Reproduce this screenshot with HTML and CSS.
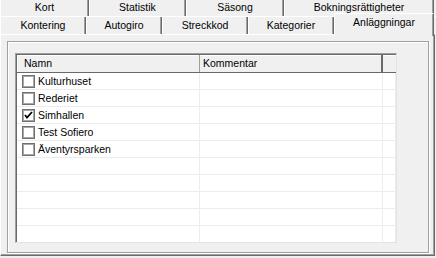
FILE: index.html
```html
<!DOCTYPE html>
<html lang="sv">
<head>
    <meta charset="UTF-8" />
    <title>Anläggningar</title>
    <link rel="stylesheet" href="styles.css">
</head>
<body>
<div class="window">
    <div class="tabrow top">
        <div class="tab" style="width: 89px">Kort</div>
        <div class="tab" style="width: 97px">Statistik</div>
        <div class="tab" style="width: 98px">Säsong</div>
        <div class="tab" style="width: 150px">Bokningsrättigheter</div>
    </div>
    <div class="tabrow bottom">
        <div class="tab" style="width: 86px">Kontering</div>
        <div class="tab" style="width: 76px">Autogiro</div>
        <div class="tab" style="width: 86px">Streckkod</div>
        <div class="tab" style="width: 86px">Kategorier</div>
        <div class="tab active" style="width: 100px">Anläggningar</div>
    </div>

    <div class="page">
        <div class="group">
            <div class="list">
                <div class="head">
                    <div class="col c1">Namn</div>
                    <div class="col c2">Kommentar</div>
                    <div class="col c3"></div>
                </div>
                <div class="rows" id="rows"></div>
            </div>
        </div>
    </div>
</div>

<script>
    const items = [
        { name: 'Kulturhuset', checked: false },
        { name: 'Rederiet', checked: false },
        { name: 'Simhallen', checked: true },
        { name: 'Test Sofiero', checked: false },
        { name: 'Äventyrsparken', checked: false }
    ];
    const check = '<svg width="9" height="9" viewBox="0 0 9 9"><path d="M1 4 L3 6.5 L8 1" fill="none" stroke="#000" stroke-width="1.8"/></svg>';

    const rows = document.getElementById('rows');
    for (let i = 0; i < 10; i++) {
        const item = items[i];
        const row = document.createElement('div');
        row.className = 'row';
        if (item) {
            row.innerHTML = `<div class="col c1"><span class="box">${item.checked ? check : ''}</span>${item.name}</div><div class="col c2"></div><div class="col c3"></div>`;
        } else {
            row.innerHTML = '<div class="col c1"></div><div class="col c2"></div><div class="col c3"></div>';
        }
        rows.appendChild(row);
    }
</script>
</body>
</html>
```

FILE: styles.css
```css
* { box-sizing: border-box; }
body {
    margin: 0;
    background: #f0f0f0;
    font-family: 'Liberation Sans', Arial, sans-serif;
    font-size: 10.5px;
    color: #000;
}
.window {
    width: 436px;
    height: 258px;
    overflow: hidden;
}

/* tab rows */
.tabrow {
    display: flex;
}
.tabrow.top { height: 16px; }
.tabrow.bottom {
    height: 18px;
    border-top: 1px solid #fff;
}
.tab {
    text-align: center;
    border-right: 1px solid #6a6a6a;
    box-shadow: inset -1px 0 0 #a0a0a0;
    border-left: 1px solid #fff;
    background: #f0f0f0;
}
.tabrow.top .tab { line-height: 15px; }
.tabrow.bottom .tab { line-height: 17px; }
.tab.active {
    margin-top: -4px;
    height: 23px;
    line-height: 18px;
    border-top: 1px solid #fff;
    position: relative;
    z-index: 1;
}

/* page */
.page {
    height: 222px;
    width: 435px;
    border-top: 1px solid #fff;
    border-left: 1px solid #fff;
    border-right: 1px solid #6a6a6a;
    border-bottom: 1px solid #6a6a6a;
    box-shadow: inset -1px -1px 0 #a0a0a0;
    padding: 6px 5px 3px 6px;
}
.group {
    height: 212px;
    border: 1px solid #a0a0a0;
    box-shadow: 1px 1px 0 #fff, inset 1px 1px 0 #fff;
    padding: 11px 31px 9px 7px;
}

/* list view */
.list {
    height: 190px;
    background: #fff;
    border-top: 1px solid #a0a0a0;
    border-left: 1px solid #a0a0a0;
    border-right: 1px solid #e3e3e3;
    border-bottom: 1px solid #e3e3e3;
    box-shadow: inset 1px 1px 0 #696969;
    overflow: hidden;
}
.head {
    display: flex;
    height: 18px;
    background: #f0f0f0;
    border-bottom: 1px solid #696969;
    margin-left: 1px;
    margin-top: 1px;
    box-shadow: inset 1px 1px 0 #fff;
}
.head .col {
    line-height: 16px;
    padding-left: 7px;
    border-right: 1px solid #a0a0a0;
}
.head .c2 {
    border-right: 2px solid #696969;
    padding-left: 3px;
}
.head .c3 { border-right: none; }

.col { flex: none; }
.c1 { width: 183px; }
.c2 { width: 183px; }
.c3 { width: 13px; }

.row {
    display: flex;
    height: 17px;
    border-bottom: 1px solid #ececec;
    margin-left: 1px;
}
.row .col {
    border-right: 1px solid #ececec;
}
.row .c1 {
    display: flex;
    align-items: center;
    padding-left: 5px;
}
.box {
    width: 13px;
    height: 13px;
    border: 1px solid #707070;
    box-shadow: inset 0 0 0 1px #a8a8a8;
    background: #fff;
    margin-right: 3px;
    display: flex;
    align-items: center;
    justify-content: center;
}
.box svg { display: block; }
```
